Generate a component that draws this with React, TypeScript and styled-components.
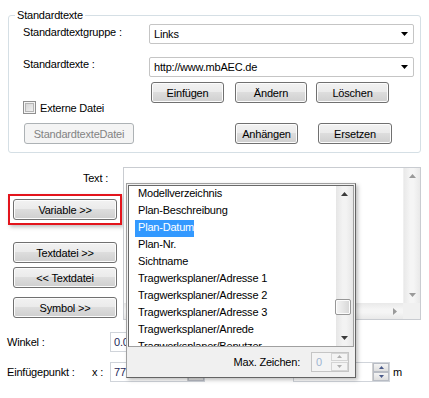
import React from 'react';
import styled, { createGlobalStyle } from 'styled-components';

const Global = createGlobalStyle`
  html, body { margin: 0; padding: 0; background: #fff; }
  body {
    font-family: "Liberation Sans", Arial, sans-serif;
    font-size: 11px;
    letter-spacing: -0.2px;
    color: #000;
  }
  * { box-sizing: border-box; }
`;

const Page = styled.div`
  position: relative;
  width: 429px;
  height: 398px;
  overflow: hidden;
  background: #fff;
`;

const Group = styled.fieldset`
  margin: 9px 0 0 8px;
  width: 413px;
  padding: 2px 0 8px 6px;
  border: 1px solid #d5dfe5;
  border-radius: 3px;
  min-inline-size: 0;
`;

const Legend = styled.legend`
  padding: 0 2px;
  line-height: 13px;
`;

const GroupBody = styled.div`
  display: flex;
  margin-left: 8px;
`;

const Col = styled.div<{ $w: number }>`
  display: flex;
  flex-direction: column;
  width: ${(p) => p.$w}px;
`;

const Label = styled.div<{ $mt: number }>`
  line-height: 13px;
  margin-top: ${(p) => p.$mt}px;
  white-space: nowrap;
`;

const CheckRow = styled.label<{ $mt: number }>`
  display: flex;
  align-items: center;
  gap: 4px;
  height: 13px;
  margin-top: ${(p) => p.$mt}px;
`;

const CheckBox = styled.span`
  width: 13px;
  height: 13px;
  border: 1px solid #8f8f8f;
  background: #f4f4f4;
  box-shadow: inset 0 0 0 1px #f4f4f4, inset 0 0 0 2px #b5b5b5;
  background-image: linear-gradient(135deg, #cfcfcf, #f7f7f7);
`;

const Button = styled.div<{ $w: number; $ml?: number; $mt?: number; $disabled?: boolean }>`
  display: flex;
  align-items: center;
  justify-content: center;
  width: ${(p) => p.$w}px;
  height: 21px;
  flex: none;
  margin-left: ${(p) => p.$ml ?? 0}px;
  margin-top: ${(p) => p.$mt ?? 0}px;
  border: 1px solid ${(p) => (p.$disabled ? '#adb2b5' : '#707070')};
  border-radius: 3px;
  color: ${(p) => (p.$disabled ? '#838383' : '#000')};
  background: ${(p) =>
    p.$disabled
      ? '#f4f4f4'
      : 'linear-gradient(#f2f2f2 0%, #ebebeb 45%, #dddddd 50%, #cfcfcf 100%)'};
  box-shadow: inset 0 0 0 1px ${(p) => (p.$disabled ? '#f4f4f4' : '#fcfcfc')};
  white-space: nowrap;
`;

const Combo = styled.div<{ $mt?: number }>`
  display: flex;
  align-items: center;
  justify-content: space-between;
  height: 20px;
  margin-top: ${(p) => p.$mt ?? 0}px;
  padding: 0 5px 0 4px;
  border: 1px solid #c5c5c5;
  border-radius: 2px;
  background: #fff;
`;

const Row = styled.div<{ $mt: number }>`
  display: flex;
  margin-top: ${(p) => p.$mt}px;
`;

const Lower = styled.div`
  display: flex;
  margin: 14px 0 0 8px;
`;

const LeftPane = styled.div`
  display: flex;
  flex-direction: column;
  width: 115px;
`;

const TextLabel = styled.div`
  line-height: 13px;
  margin-top: 5px;
  padding-right: 15px;
  text-align: right;
`;

const RedBox = styled.div`
  width: 114px;
  height: 31px;
  margin-top: 9px;
  padding: 3px 0 0 3px;
  border: 2px solid #e3141c;
  box-shadow: 2px 2px 4px rgba(0, 0, 0, 0.25);
`;

const TextArea = styled.div`
  display: grid;
  grid-template-columns: 1fr 17px;
  grid-template-rows: 1fr 16px;
  width: 298px;
  height: 153px;
  border: 1px solid #c9ccd1;
  background: #fff;
`;

const VScroll = styled.div`
  display: flex;
  flex-direction: column;
  justify-content: space-between;
  align-items: center;
  width: 17px;
  padding: 6px 0 6px;
  background: linear-gradient(90deg, #e9e9e9, #f5f5f5 40%, #f5f5f5 60%, #e9e9e9);
  border-left: 1px solid #f0f0f0;
`;

const HScroll = styled.div`
  display: flex;
  justify-content: flex-end;
  align-items: center;
  padding-right: 6px;
  background: linear-gradient(#e9e9e9, #f5f5f5 40%, #f5f5f5 60%, #e9e9e9);
`;

const Corner = styled.div`
  background: #f0f0f0;
`;

const Fields = styled.div`
  display: grid;
  grid-template-columns: 85px 18px 95px 60px 28px 97px 1fr;
  grid-template-rows: 20px 20px;
  row-gap: 10px;
  align-items: center;
  margin: 12px 0 0 7px;
`;

const Input = styled.div`
  display: flex;
  align-items: center;
  justify-content: space-between;
  height: 20px;
  padding-left: 3px;
  border: 1px solid #d0d4da;
  color: #1e2a5a;
  background: #fff;
`;

const Spin = styled.div`
  display: flex;
  flex-direction: column;
  width: 17px;
  height: 18px;
  border-left: 1px solid #d0d0d0;
`;

const SpinHalf = styled.div`
  flex: 1;
  display: flex;
  align-items: center;
  justify-content: center;
  background: linear-gradient(#f4f4f4, #dedede);
  border: 1px solid #b8bcc4;
`;

const Popup = styled.div`
  position: absolute;
  left: 126px;
  top: 183px;
  width: 230px;
  height: 195px;
  display: flex;
  flex-direction: column;
  background: #f0f0f0;
  border: 1px solid #a0a0a0;
  border-right-color: #646464;
  border-bottom-color: #646464;
  box-shadow: 2px 2px 4px rgba(0, 0, 0, 0.25);
`;

const ListBox = styled.div`
  display: flex;
  height: 162px;
  margin: 1px;
  border: 1px solid #696969;
  border-right-color: #a0a0a0;
  border-bottom-color: #a0a0a0;
  background: #fff;
`;

const Items = styled.div`
  flex: 1;
  overflow: hidden;
  padding-left: 6px;
`;

const Item = styled.div<{ $sel?: boolean }>`
  height: 17px;
  line-height: 15px;
  padding-left: 3px;
  width: fit-content;
  white-space: nowrap;
  color: ${(p) => (p.$sel ? '#fff' : '#000')};
  background: ${(p) => (p.$sel ? '#3399ff' : 'transparent')};
`;

const ListScroll = styled.div`
  position: relative;
  display: flex;
  flex-direction: column;
  justify-content: space-between;
  align-items: center;
  width: 17px;
  padding: 6px 0 6px;
  background: linear-gradient(90deg, #e6e6e6, #f3f3f3 40%, #f3f3f3 60%, #e6e6e6);
`;

const Thumb = styled.div`
  position: absolute;
  left: -1px;
  top: 113px;
  width: 16px;
  height: 16px;
  border: 1px solid #979797;
  border-radius: 2px;
  background: linear-gradient(90deg, #f4f4f4, #e6e6e6 50%, #d6d6d6);
  box-shadow: inset 0 0 0 1px #fcfcfc;
`;

const Footer = styled.div`
  flex: 1;
  display: flex;
  align-items: center;
  justify-content: flex-end;
  gap: 11px;
  padding: 0 6px 2px 0;
`;

const SpinBox = styled.div`
  display: flex;
  justify-content: space-between;
  align-items: center;
  width: 38px;
  height: 20px;
  padding-left: 4px;
  border: 1px solid #c5c5c5;
  background: #f4f4f4;
  color: #9fb4d2;
`;

const SpinDisabled = styled.div`
  display: flex;
  flex-direction: column;
  width: 17px;
  height: 18px;
  gap: 1px;
`;

const SpinHalfDisabled = styled.div`
  flex: 1;
  display: flex;
  align-items: center;
  justify-content: center;
  border: 1px solid #d5d5d5;
  background: #f4f4f4;
`;

const Unit = styled.span`
  padding-left: 3px;
`;

type Dir = 'up' | 'down' | 'right';
const Tri = ({ dir, color = '#000', size = 7 }: { dir: Dir; color?: string; size?: number }) => {
  const h = Math.ceil(size / 2);
  if (dir === 'right')
    return (
      <svg width={h} height={size} viewBox={`0 0 ${h} ${size}`}>
        <polygon points={`0,0 ${h},${size / 2} 0,${size}`} fill={color} />
      </svg>
    );
  return (
    <svg width={size} height={h} viewBox={`0 0 ${size} ${h}`}>
      <polygon
        points={dir === 'down' ? `0,0 ${size},0 ${size / 2},${h}` : `0,${h} ${size},${h} ${size / 2},0`}
        fill={color}
      />
    </svg>
  );
};

const items = [
  'Modellverzeichnis',
  'Plan-Beschreibung',
  'Plan-Datum',
  'Plan-Nr.',
  'Sichtname',
  'Tragwerksplaner/Adresse 1',
  'Tragwerksplaner/Adresse 2',
  'Tragwerksplaner/Adresse 3',
  'Tragwerksplaner/Anrede',
  'Tragwerksplaner/Benutzer',
];

export default function App() {
  return (
    <Page>
      <Global />
      <Group>
        <Legend>Standardtexte</Legend>
        <GroupBody>
          <Col $w={126}>
            <Label $mt={2}>Standardtextgruppe :</Label>
            <Label $mt={19}>Standardtexte :</Label>
            <CheckRow $mt={30}>
              <CheckBox />
              Externe Datei
            </CheckRow>
            <Button $w={110} $ml={1} $mt={9} $disabled>
              StandardtexteDatei
            </Button>
          </Col>
          <Col $w={265}>
            <Combo>
              <span>Links</span>
              <Tri dir="down" />
            </Combo>
            <Combo $mt={13}>
              <span>http://www.mbAEC.de</span>
              <Tri dir="down" />
            </Combo>
            <Row $mt={5}>
              <Button $w={73} $ml={2}>Einfügen</Button>
              <Button $w={72} $ml={11}>Ändern</Button>
              <Button $w={73} $ml={9}>Löschen</Button>
            </Row>
            <Row $mt={20}>
              <Button $w={63} $ml={86}>Anhängen</Button>
              <Button $w={74} $ml={20}>Ersetzen</Button>
            </Row>
          </Col>
        </GroupBody>
      </Group>

      <Lower>
        <LeftPane>
          <TextLabel>Text :</TextLabel>
          <RedBox>
            <Button $w={104}>Variable &gt;&gt;</Button>
          </RedBox>
          <Button $w={104} $ml={5} $mt={17}>Textdatei &gt;&gt;</Button>
          <Button $w={104} $ml={5} $mt={4}>&lt;&lt; Textdatei</Button>
          <Button $w={104} $ml={5} $mt={9}>Symbol &gt;&gt;</Button>
        </LeftPane>
        <TextArea>
          <div />
          <VScroll>
            <Tri dir="up" color="#9a9a9a" />
            <Tri dir="down" color="#9a9a9a" />
          </VScroll>
          <HScroll>
            <Tri dir="right" color="#9a9a9a" />
          </HScroll>
          <Corner />
        </TextArea>
      </Lower>

      <Fields>
        <span>Winkel :</span>
        <span />
        <Input>0.00</Input>
        <span />
        <span />
        <span />
        <span />
        <span>Einfügepunkt :</span>
        <span>x :</span>
        <Input>
          77.00
          <Spin>
            <SpinHalf><Tri dir="up" color="#4a5a8a" size={5} /></SpinHalf>
            <SpinHalf><Tri dir="down" color="#4a5a8a" size={5} /></SpinHalf>
          </Spin>
        </Input>
        <span />
        <span>y :</span>
        <Input>
          1.00
          <Spin>
            <SpinHalf><Tri dir="up" color="#4a5a8a" size={5} /></SpinHalf>
            <SpinHalf><Tri dir="down" color="#4a5a8a" size={5} /></SpinHalf>
          </Spin>
        </Input>
        <Unit>m</Unit>
      </Fields>

      <Popup>
        <ListBox>
          <Items>
            {items.map((t) => (
              <Item key={t} $sel={t === 'Plan-Datum'}>
                {t}
              </Item>
            ))}
          </Items>
          <ListScroll>
            <Tri dir="up" color="#3c3c3c" />
            <Thumb />
            <Tri dir="down" color="#3c3c3c" />
          </ListScroll>
        </ListBox>
        <Footer>
          <span>Max. Zeichen:</span>
          <SpinBox>
            0
            <SpinDisabled>
              <SpinHalfDisabled><Tri dir="up" color="#b0b0b0" size={5} /></SpinHalfDisabled>
              <SpinHalfDisabled><Tri dir="down" color="#b0b0b0" size={5} /></SpinHalfDisabled>
            </SpinDisabled>
          </SpinBox>
        </Footer>
      </Popup>
    </Page>
  );
}
